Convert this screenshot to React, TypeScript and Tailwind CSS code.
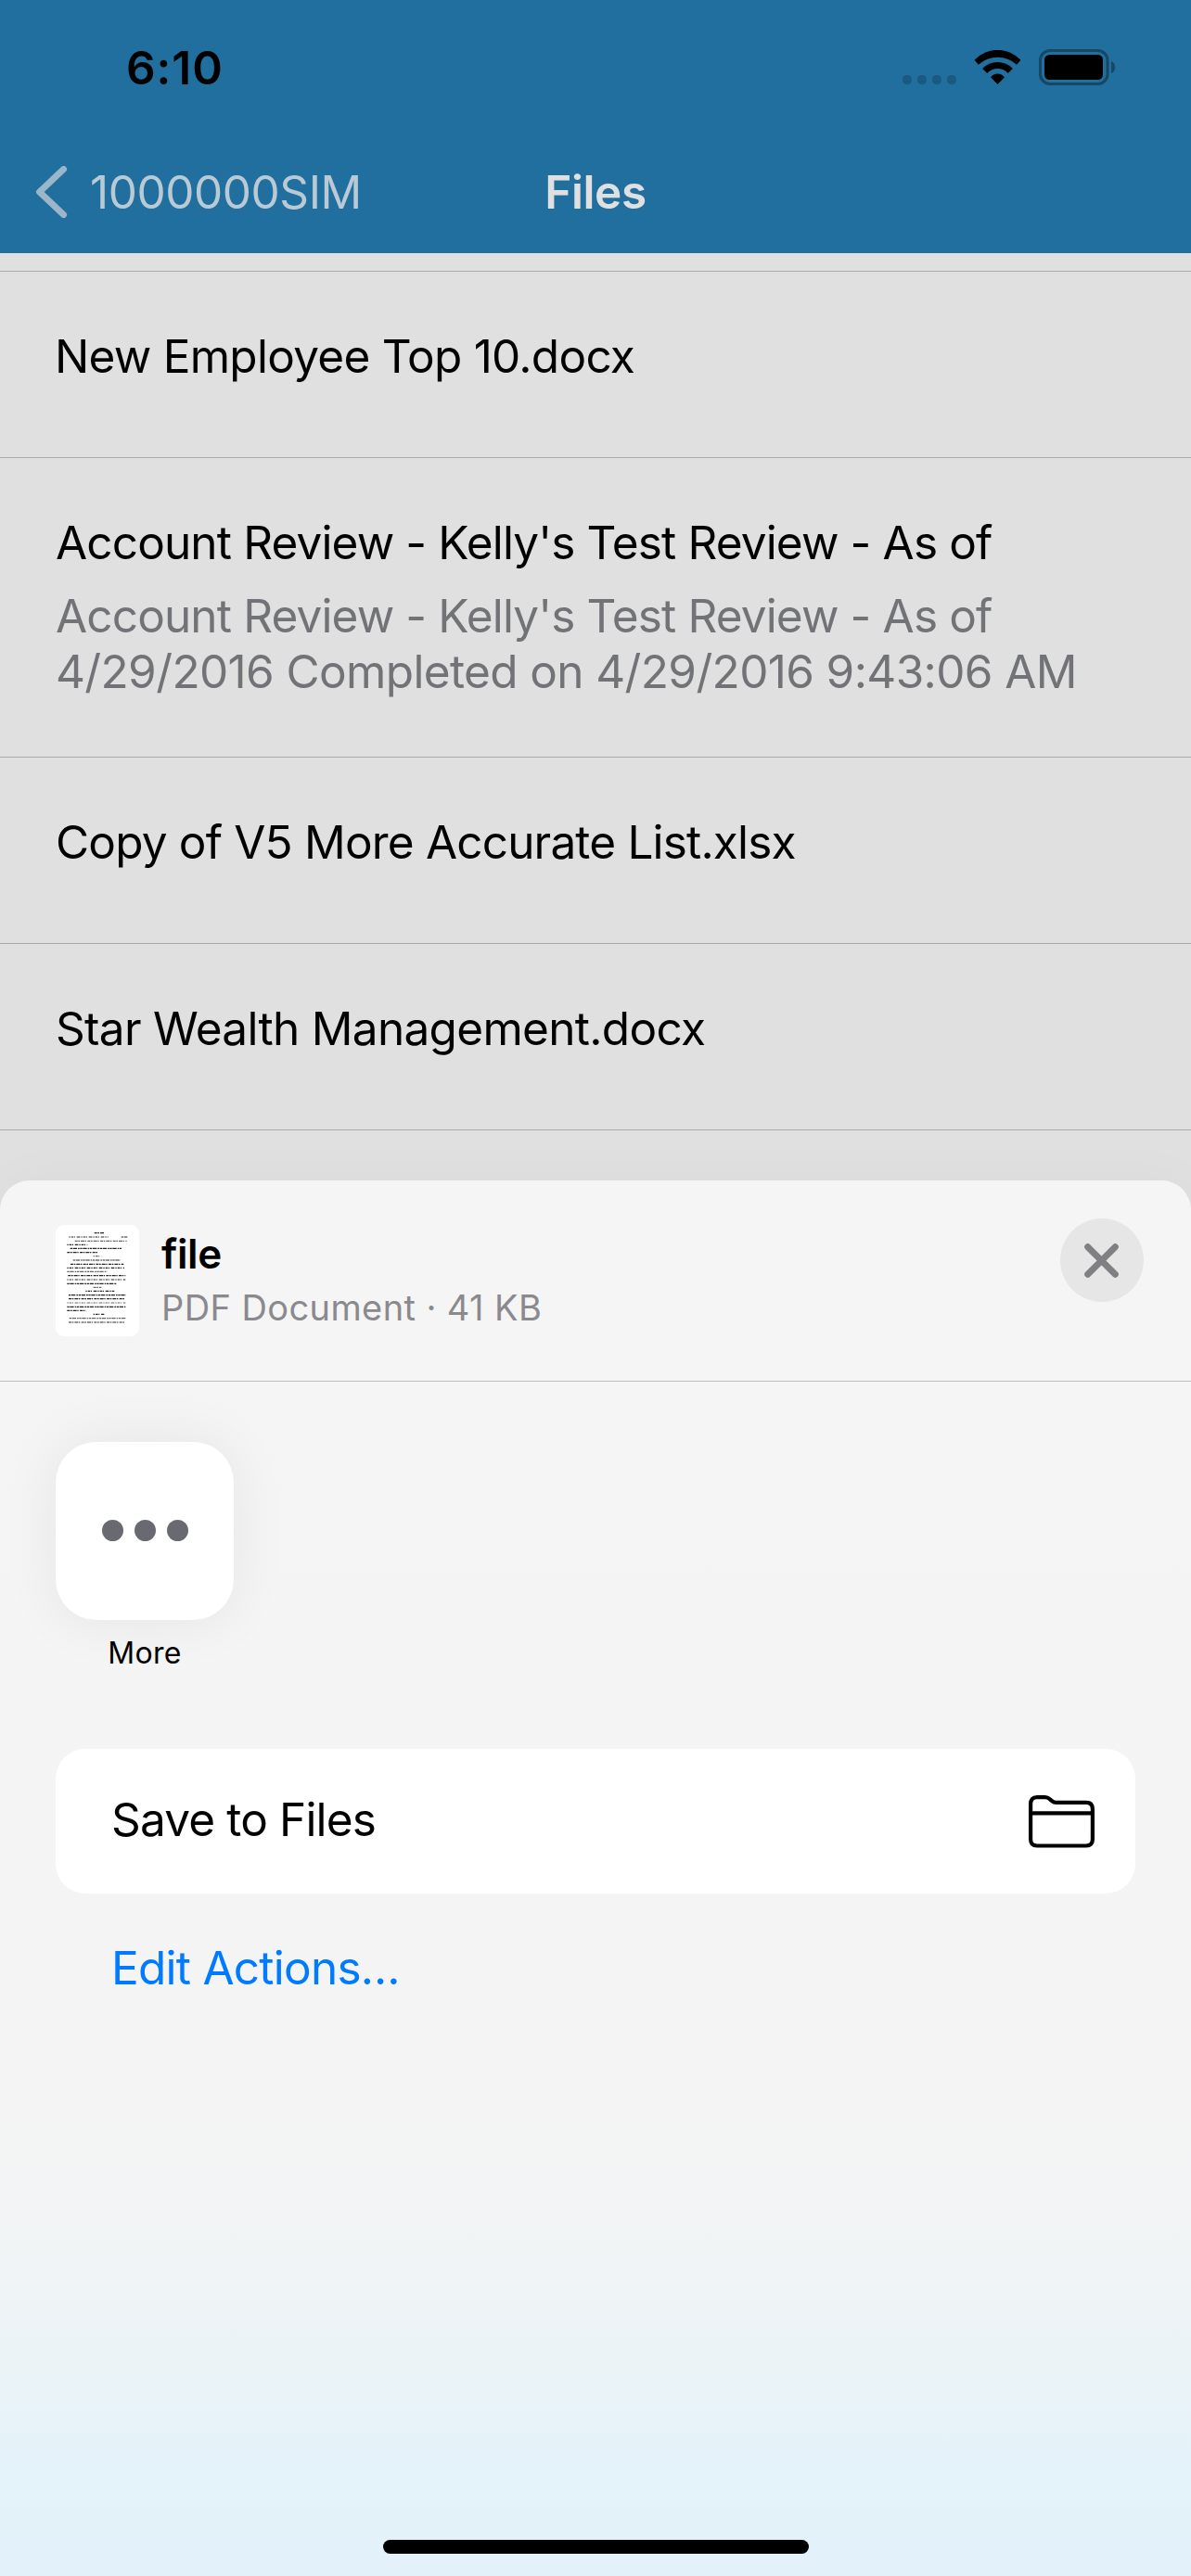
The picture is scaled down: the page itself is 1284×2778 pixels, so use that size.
type FileItem = { name: string; spacing: string; details?: { text: string; spacing: string }[] };

const files: FileItem[] = [
  { name: "New Employee Top 10.docx", spacing: "-ml-px tracking-[-0.74px]" },
  {
    name: "Account Review - Kelly's Test Review - As of",
    spacing: "tracking-[-0.86px]",
    details: [
      { text: "Account Review - Kelly's Test Review - As of", spacing: "tracking-[-0.86px]" },
      { text: "4/29/2016 Completed on 4/29/2016 9:43:06 AM", spacing: "tracking-[-0.63px]" },
    ],
  },
  { name: "Copy of V5 More Accurate List.xlsx", spacing: "tracking-[-0.82px]" },
  { name: "Star Wealth Management.docx", spacing: "tracking-[-0.69px]" },
];

// Text lines of the document preview: start, end, vertical centre.
const previewLines: [number, number, number][] = [
  [155, 187, 59], [73, 200, 72], [242, 262, 72], [92, 260, 85], [67, 133, 97], [77, 243, 109],
  [67, 168, 122], [152, 178, 134], [86, 240, 147], [78, 250, 160], [67, 252, 172],
  [67, 196, 184], [70, 256, 197], [67, 256, 210], [67, 228, 223], [152, 178, 235],
  [127, 220, 247], [72, 258, 260], [72, 255, 272], [67, 256, 285], [67, 256, 298],
  [67, 128, 310], [152, 187, 322], [74, 256, 335], [72, 252, 348],
];
const dashes = ["9 2 5 3 12 2 4 4", "4 3 8 2 3 5 11 3", "7 2 13 3 5 2"];

function StatusBar() {
  return (
    <div className="flex h-[60px] items-start justify-between pl-[136px] pr-[81px]">
      <span className="font-semibold tracking-[0.93px] text-black">6:10</span>
      <div className="flex items-start pt-[10px]">
        <div className="mt-[28px] flex gap-[6px]">
          {[0, 1, 2, 3].map((i) => (
            <span key={i} className="h-[10px] w-[10px] rounded-[4.5px] bg-[#1b5980]" />
          ))}
        </div>
        <svg className="ml-[19px] mt-px" width="51" height="37" viewBox="0 0 51 37" strokeLinejoin="round">
          <path d="M0.5 10.8A34 34 0 0 1 50.5 10.8L46 15.8A30 30 0 0 0 5 15.8Z" />
          <path d="M9.1 20A22.6 22.6 0 0 1 41.9 20L36.7 25A15 15 0 0 0 14.3 25Z" />
          <path d="M18 29.2A9.6 9.6 0 0 1 33 29.2L25.5 37Z" />
        </svg>
        <svg className="ml-[19px]" width="83" height="39" viewBox="0 0 83 39">
          <rect x="1.5" y="1.5" width="72.5" height="36" rx="10.5" fill="none" stroke="#164863" strokeWidth="3" />
          <rect x="6" y="6" width="63" height="27" rx="5.5" />
          <path d="M78 13C83.6 15 83.6 24 78 26Z" fill="#164863" />
        </svg>
      </div>
    </div>
  );
}

function NavBar() {
  return (
    <div className="mt-[74px] grid h-[60px] grid-cols-3 items-center">
      <div className="flex items-center pl-[39px] text-[#b9cad5]">
        <svg width="34" height="56" viewBox="0 0 34 56" fill="none" stroke="#9cb6c9" strokeWidth="7" strokeLinecap="round" strokeLinejoin="round">
          <path d="M29.5 3.5L3.6 28L29.5 52.5" />
        </svg>
        <span className="ml-[24px] tracking-[-0.45px]">1000000SIM</span>
      </div>
      <span className="text-center font-semibold tracking-[-0.4px] text-[#e0e0e0]">Files</span>
    </div>
  );
}

function FileRow({ file }: { file: FileItem }) {
  return (
    <li className={`border-b border-[#aaaaab] pl-[60px] pt-[61px] whitespace-nowrap ${file.details ? "h-[323px]" : "h-[201px]"}`}>
      <p className={file.spacing}>{file.name}</p>
      {file.details && (
        <div className="mt-[19px] text-[#727377]">
          {file.details.map((line) => (
            <p key={line.text} className={line.spacing}>{line.text}</p>
          ))}
        </div>
      )}
    </li>
  );
}

function DocumentPreview() {
  return (
    <div className="h-[120px] w-[90px] overflow-hidden rounded-[9px] bg-white">
      <svg width="90" height="120" viewBox="30 33 270 360" stroke="#000" strokeWidth="3.6" fill="none">
        {previewLines.map(([from, to, y], i) => (
          <path key={i} d={`M${from} ${y}H${to}`} strokeDasharray={dashes[i % 3]} strokeOpacity={i % 4 === 3 ? 0.6 : 0.85} />
        ))}
      </svg>
    </div>
  );
}

function SheetHeader() {
  return (
    <div className="flex h-[217px] items-start border-b border-[#bfbfc0] pl-[60px] pr-[51px]">
      <div className="mt-[48px]">
        <DocumentPreview />
      </div>
      <div className="ml-[24px] mt-[52px] flex-1">
        <p className="text-[44px] font-semibold leading-[54px] tracking-[-0.4px]">file</p>
        <p className="mt-[7px] text-[38px] leading-[48px] tracking-[0.4px] text-[#8a8a8e]">PDF Document · 41 KB</p>
      </div>
      <button className="mt-[41px] flex h-[90px] w-[90px] items-center justify-center rounded-full bg-[#e6e6e7]">
        <svg className="mr-px" width="37" height="37" viewBox="0 0 37 37" stroke="#808084" strokeWidth="7" strokeLinecap="round">
          <path d="M3.7 3.7L33.3 33.3M33.3 3.7L3.7 33.3" />
        </svg>
      </button>
    </div>
  );
}

function ShareSheet() {
  return (
    <section className="flex h-[1505px] flex-col rounded-t-[32px] bg-[linear-gradient(180deg,#f5f5f5_0%,#f4f4f4_66%,#f1f4f5_76%,#ebf3f7_85%,#e4f2f9_92%,#e3f1fa_100%)] shadow-[0_0_60px_rgba(0,0,0,0.03)]">
      <SheetHeader />
      <div className="ml-[60px] mt-[65px] flex w-[192px] flex-col items-center">
        <div className="flex h-[192px] w-full items-center justify-center gap-[12px] rounded-[44px] bg-white pb-px shadow-[0_0_60px_4px_rgba(0,0,0,0.06)]">
          {[0, 1, 2].map((i) => (
            <span key={i} className="h-[23px] w-[23px] rounded-full bg-[#696971]" />
          ))}
        </div>
        <span className="mt-[16px] text-[32px] leading-[40px] tracking-[0.3px]">More</span>
      </div>
      <div className="mx-[60px] mt-[83px] flex h-[156px] items-center justify-between rounded-[32px] bg-white pl-[60px] pr-[44px]">
        <span className="mb-[4px] tracking-[-0.84px]">Save to Files</span>
        <svg width="71" height="57" viewBox="0 0 71 57" fill="none" stroke="#000" strokeWidth="4.2">
          <path d="M2.1 9.6Q2.1 2.1 9 2.1H17.5Q20.5 2.1 22.6 4.1L25 6.2Q27 7.9 29.5 7.9H62Q68.9 7.9 68.9 15V47.5Q68.9 54.5 62 54.5H9Q2.1 54.5 2.1 47.5ZM2.1 19.3H68.9" />
        </svg>
      </div>
      <a className="ml-[120px] mt-[50px] self-start tracking-[-0.75px] text-[#007aff]">Edit Actions…</a>
      <div className="mb-[24px] ml-[413px] mt-auto h-[15px] w-[459px] rounded-full bg-black" />
    </section>
  );
}

export default function App() {
  return (
    <main className="flex h-[2778px] w-[1284px] flex-col overflow-hidden bg-[#e0e0e0] font-['Inter',sans-serif] text-[49.5px] leading-[60px] text-black">
      <header className="h-[273px] bg-[#216f9f] pt-[43px]">
        <StatusBar />
        <NavBar />
      </header>
      <ul className="h-[1000px] pt-[19px]">
        <li className="h-px bg-[#aaaaab]" />
        {files.map((file) => (
          <FileRow key={file.name} file={file} />
        ))}
      </ul>
      <ShareSheet />
    </main>
  );
}
